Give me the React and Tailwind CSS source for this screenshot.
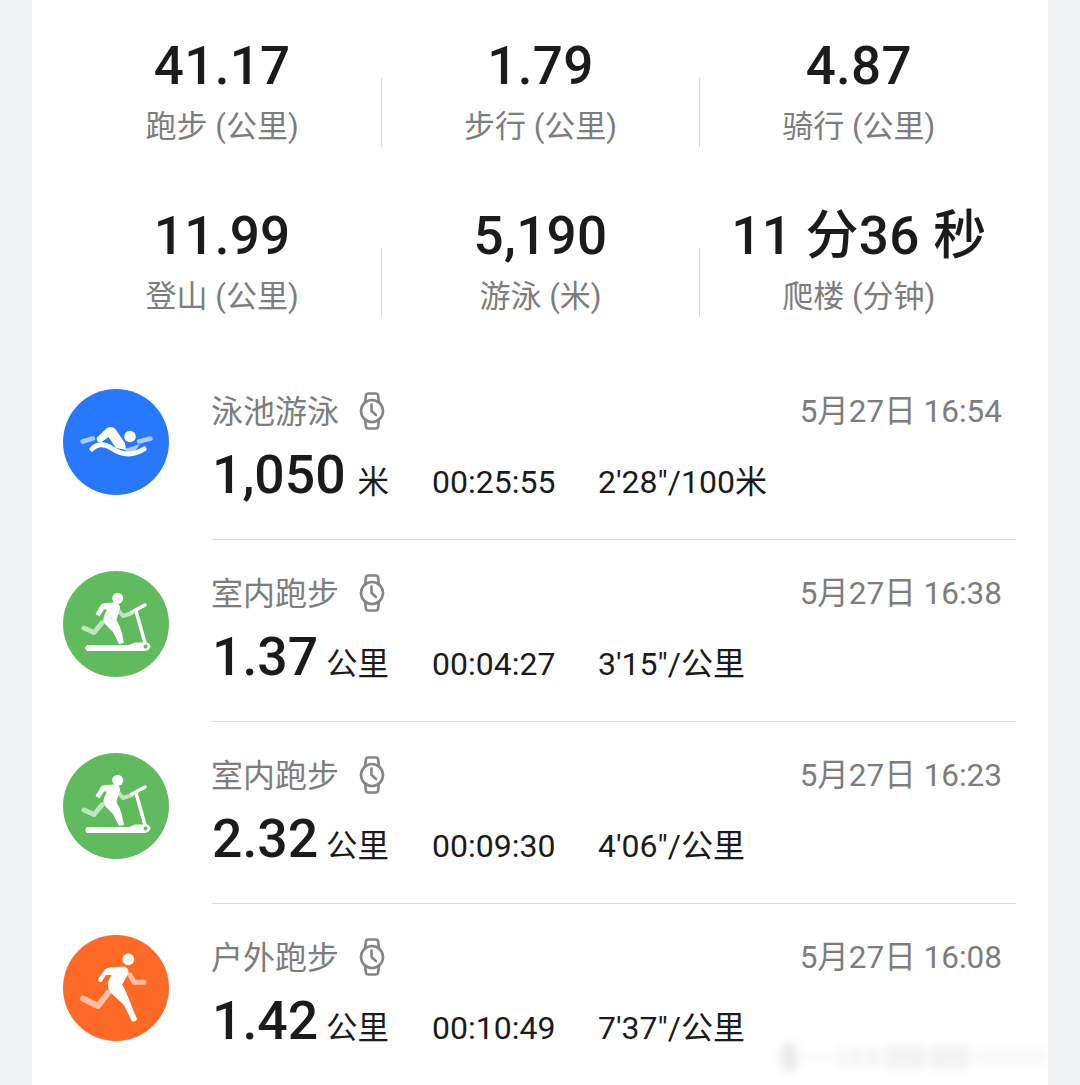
const FONT = "font-['Roboto','Noto_Sans_CJK_SC',sans-serif]";

const stats = [
  ["41.17", "跑步 (公里)"],
  ["1.79", "步行 (公里)"],
  ["4.87", "骑行 (公里)"],
  ["11.99", "登山 (公里)"],
  ["5,190", "游泳 (米)"],
  ["11 分36 秒", "爬楼 (分钟)"],
];

function SwimIcon() {
  return (
    <svg viewBox="0 0 106 106" className="w-[106px] h-[106px]">
      <circle cx="53" cy="53" r="53" fill="#2878fb" />
      <path d="M19.500 52.500 L30 49.500" stroke="#a9cbff" strokeWidth="4.500" strokeLinecap="round" fill="none" />
      <path d="M76 52.500 L87.500 49.500" stroke="#a9cbff" strokeWidth="4.500" strokeLinecap="round" fill="none" />
      <path d="M62 60 L77 55 L72 62 L64 65 Z" fill="#a9cbff" />
      <circle cx="67" cy="47.500" r="5.800" fill="#fff" />
      <path d="M34 48.500 L44 39 Q46.500 37.500 50 38.500 Q52 39 53 41 L62 54 L63 61 L53 59 L45.500 48 L38 53.500 L34.500 52.500 Q33 50 34 48.500 Z" fill="#fff" />
      <path d="M29 60 C35 54 42 55 49 59.500 C59 66 70 67 81 60" stroke="#fff" strokeWidth="5" strokeLinecap="round" fill="none" />
    </svg>
  );
}

function TreadIcon() {
  return (
    <svg viewBox="0 0 106 106" className="w-[106px] h-[106px]">
      <circle cx="53" cy="53" r="53" fill="#5fbb5e" />
      <path d="M21 57 L31 61.500 L39 52" stroke="#bfe5bd" strokeWidth="5" strokeLinecap="round" strokeLinejoin="round" fill="none" />
      <path d="M55 39 L60 45 L69 42" stroke="#bfe5bd" strokeWidth="4" strokeLinecap="round" strokeLinejoin="round" fill="none" />
      <circle cx="54.700" cy="27.300" r="5.500" fill="#fff" />
      <path d="M32.500 43 L38 33.500 Q39.500 32 42 32 L52 31.500 Q57 32 57 37 L53.500 49 Q57 55 59 62 L61 72 L56 73 L50 61 L42 53 Q39 49 41.500 44 L44 38.500 L41 38.500 L36.500 45.500 Z" fill="#fff" />
      <path d="M69 41 L82 34" stroke="#fff" strokeWidth="3.500" strokeLinecap="round" fill="none" />
      <path d="M73 40 L82 72" stroke="#fff" strokeWidth="3.500" strokeLinecap="round" fill="none" />
      <path d="M24 74 L66 74 L72 71.500 L84 71.500 Q88 73 87.500 76 Q86 79.500 82 80 L24 80 Q20.500 77 24 74 Z" fill="#fff" />
      <circle cx="82.500" cy="75.500" r="2" fill="#5fbb5e" />
    </svg>
  );
}

function RunIcon() {
  return (
    <svg viewBox="0 0 106 106" className="w-[106px] h-[106px]">
      <circle cx="53" cy="53" r="53" fill="#fd6a26" />
      <path d="M20 63.500 L35 71 L45 58" stroke="#fdbfa2" strokeWidth="6" strokeLinecap="round" strokeLinejoin="round" fill="none" />
      <path d="M67 40 L71 47.300 L81 47.300" stroke="#fdbfa2" strokeWidth="5" strokeLinecap="round" strokeLinejoin="round" fill="none" />
      <circle cx="65.300" cy="24.300" r="5.900" fill="#fff" />
      <path d="M35 44 L42 34.500 Q44 32.500 47 32.500 L60 31.500 Q66 32 65.500 38 L59 50 Q62 53 63 57 L74 84 Q73 87 69 86.500 L61 70 L48 58 Q44 53 45 47 L48.500 40 L43 40 L38.500 47 Q35 47.500 35 44 Z" fill="#fff" />
    </svg>
  );
}

function WatchIcon() {
  return (
    <svg viewBox="0 0 26 38" className="w-[26px] h-[38px] -mt-[2px]" fill="none" stroke="#858585" strokeWidth="2.600" strokeLinejoin="round" strokeLinecap="round">
      <circle cx="13" cy="19" r="11" />
      <path d="M6 10.500 L7 3 Q7.500 1.500 9 1.500 L17 1.500 Q18.500 1.500 19 3 L20 10.500" />
      <path d="M6 27.500 L7 35 Q7.500 36.500 9 36.500 L17 36.500 Q18.500 36.500 19 35 L20 27.500" />
      <path d="M12.500 12.500 L12.500 19 L17 23" />
    </svg>
  );
}

const rows = [
  { icon: <SwimIcon />, title: "泳池游泳", date: "5月27日 16:54", dist: "1,050", unit: "米", time: "00:25:55", pace: "2'28\"/100米" },
  { icon: <TreadIcon />, title: "室内跑步", date: "5月27日 16:38", dist: "1.37", unit: "公里", time: "00:04:27", pace: "3'15\"/公里" },
  { icon: <TreadIcon />, title: "室内跑步", date: "5月27日 16:23", dist: "2.32", unit: "公里", time: "00:09:30", pace: "4'06\"/公里" },
  { icon: <RunIcon />, title: "户外跑步", date: "5月27日 16:08", dist: "1.42", unit: "公里", time: "00:10:49", pace: "7'37\"/公里" },
];

export default function App() {
  return (
    <div className={`${FONT} relative w-[1080px] h-[1085px] overflow-hidden bg-[#f1f3f5]`}>
      <div className="mx-[32px] h-full bg-white px-[31px]">
        <div className="grid grid-cols-3 pt-[31px] w-[955px]">
          {stats.map(([n, l], i) => (
            <div key={i} className="relative h-[170px] flex flex-col items-center">
              <div className="h-[70px] leading-[70px] text-[53px] tracking-[0.3px] font-medium text-[#1b1b1b] whitespace-nowrap">{n}</div>
              <div className="h-[52px] leading-[52px] text-[31px] text-[#7d7d7d] whitespace-nowrap">{l}</div>
              {i % 3 !== 2 && <div className={`absolute top-[47px] h-[69px] w-px bg-[#d9d9d9] ${i % 3 === 0 ? "right-[-1px]" : "right-0"}`} />}
            </div>
          ))}
        </div>
        <div className="mt-[18px]">
          {rows.map((r, i) => (
            <div key={i} className="flex h-[182px]">
              <div className="w-[149px] shrink-0">{r.icon}</div>
              <div className={`w-[804px] ${i < 3 ? "border-b border-[#dcdcdc]" : ""} h-[151px]`}>
                <div className="flex items-center justify-between h-[46px] pr-[14px]">
                  <div className="flex items-center gap-[20px] -ml-[1px]">
                    <span className="text-[32px] leading-[46px] text-[#7d7d7d]">{r.title}</span>
                    <WatchIcon />
                  </div>
                  <span className="text-[31.500px] leading-[46px] text-[#7d7d7d]">{r.date}</span>
                </div>
                <div className="flex items-baseline h-[64px] mt-[8px] leading-[64px] text-[#1b1b1b]">
                  <span className="w-[220px] flex items-baseline">
                    <span className="text-[53.500px] font-medium">{r.dist}</span>
                    <span className="ml-auto mr-[43px] text-[31.500px]">{r.unit}</span>
                  </span>
                  <span className="w-[166px] text-[32px]">{r.time}</span>
                  <span className="text-[32px]">{r.pace}</span>
                </div>
              </div>
            </div>
          ))}
        </div>
      </div>
      <div className="absolute left-[780px] top-[1042px] w-[268px] h-[30px] flex items-center gap-[5px] blur-[4px] opacity-25">
        <div className="w-[18px] h-[30px] rounded-full bg-[#b5b5b5]" />
        <div className="w-[30px] h-[4px] bg-[#c8c8c8]" />
        <div className="w-[8px] h-[22px] bg-[#d5d5d5]" />
        <div className="w-[12px] h-[22px] bg-[#d5d5d5]" />
        <div className="w-[12px] h-[22px] bg-[#d5d5d5]" />
        <div className="w-[40px] h-[24px] bg-[#cfcfcf]" />
        <div className="w-[40px] h-[24px] bg-[#cfcfcf]" />
        <div className="flex-1 h-[16px] bg-[#e4e4e4]" />
      </div>
    </div>
  );
}
